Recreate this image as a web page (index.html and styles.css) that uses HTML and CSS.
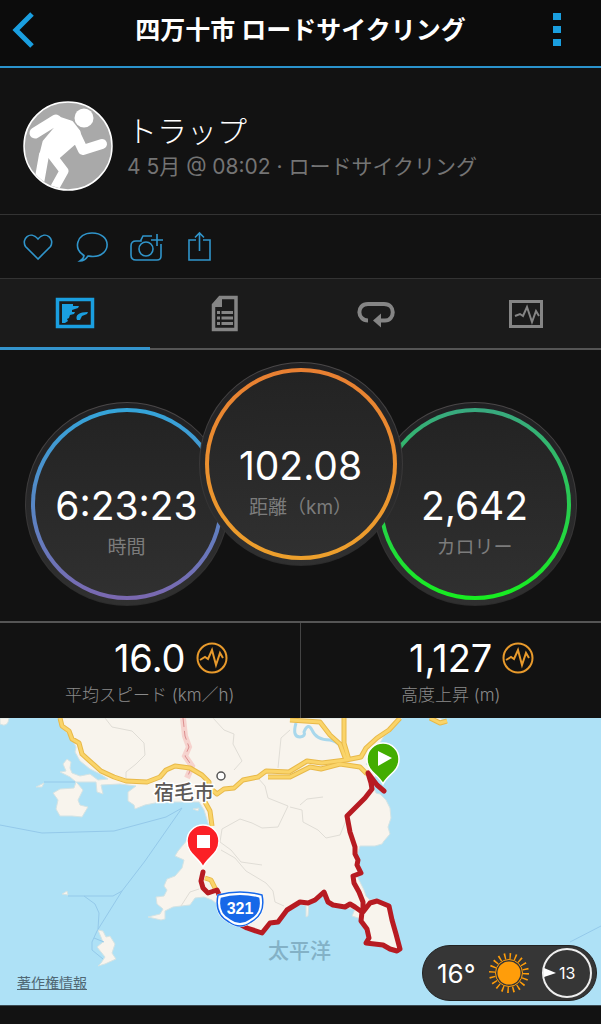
FILE: index.html
```html
<!DOCTYPE html>
<html lang="ja">
<head>
  <meta charset="UTF-8" />
  <meta name="viewport" content="width=device-width, initial-scale=1.0"/>
  <title>四万十市 ロードサイクリング</title>
  <link rel="stylesheet" href="styles.css">
</head>
<body>

  <header class="topbar">
    <button class="icon-btn" aria-label="戻る">
      <svg width="22" height="36" viewBox="0 0 22 36"><path d="M20 2 4 18l16 16" fill="none" stroke="#1a9fe0" stroke-width="5"/></svg>
    </button>
    <h1>四万十市 ロードサイクリング</h1>
    <button class="icon-btn menu" aria-label="メニュー">
      <svg width="8" height="34" viewBox="0 0 8 34" fill="#1a9fe0"><path d="M0 0h8v7H0zM0 13h8v7H0zM0 26h8v7H0z"/></svg>
    </button>
  </header>

  <section class="profile">
    <svg class="avatar" viewBox="0 0 90 90">
      <defs><clipPath id="avatarClip"><circle cx="45" cy="45" r="43"/></clipPath></defs>
      <circle cx="45" cy="45" r="44" fill="#a9a9a9" stroke="#fff" stroke-width="1.5"/>
      <g clip-path="url(#avatarClip)" fill="#fff" stroke="#fff" stroke-linecap="round" stroke-linejoin="round">
        <circle cx="61" cy="17" r="9.500" stroke="none"/>
        <path d="M12 32 33 19" stroke-width="11" fill="none"/>
        <path d="M33 17 48 22 55 31 56 39 50 42 34 56 19 53 22 41 33 28z" stroke-width="5"/>
        <path d="M52 32 60 49 79 43" stroke-width="10" fill="none"/>
        <path d="M28 53 41 70 31 88" stroke-width="9" fill="none"/>
        <path d="M21 54 16 82" stroke-width="10" fill="none"/>
      </g>
    </svg>
    <div class="profile-text">
      <h2>トラップ</h2>
      <p>4 5月 @ 08:02 · ロードサイクリング</p>
    </div>
  </section>

  <div class="actions">
    <button class="icon-btn" aria-label="いいね">
      <svg width="32" height="32" viewBox="0 0 32 32"><path d="M16 28 3.500 15.500C-1 8 8-1 16 8c8-9 17 0 12.500 7.500z"/></svg>
    </button>
    <button class="icon-btn" aria-label="コメント">
      <svg width="32" height="32" viewBox="0 0 32 32"><path d="M8 24.500C-3 19 0 2 16 2c20 0 20 23 1 23.500-3 0-4-.5-5-.5-2 3-5 5-8 5 3-2 4-3.500 4-5.500z"/></svg>
    </button>
    <button class="icon-btn" aria-label="写真を追加">
      <svg width="34" height="32" viewBox="0 0 34 32"><path d="M22 5h-9l-2 4v1H6q-5 0-5 5v9q0 5 5 5h21q4 0 4-4V13"/><circle cx="16" cy="18" r="7"/><path d="M27 3v12M21 9h12"/></svg>
    </button>
    <button class="icon-btn" aria-label="共有">
      <svg width="28" height="32" viewBox="2 0 28 32"><path d="M12 9H5v20h21V9h-7M15.500 20V2M11 6.500 15.500 2 20 6.500"/></svg>
    </button>
  </div>

  <nav class="tabs">
    <button class="tab active" aria-label="マップ">
      <svg width="40" height="36" viewBox="0 0 40 36">
        <path d="M2.500 4.500h35v27h-35z" fill="none" stroke="#1a9fe0" stroke-width="3.500"/>
        <path d="M7 9h11l0 2 6 0-1 2-6 2 0 2 3 0-1 2-4 1-1 3-2 1 1 2-3 2H7zM22 25c-2-5 2-8 11-8l-1 2-5 2-2 4z" fill="#1a9fe0"/>
      </svg>
    </button>
    <button class="tab" aria-label="詳細">
      <svg width="28" height="38" viewBox="0 0 28 38">
        <path d="M9 2.500h16v32H2.500V10z" fill="none" stroke="#858585" stroke-width="3.500"/>
        <path d="M2 10 9 2h2v10H2zM6 16h3v3H6zM10.500 16H22v3H10.500zM6 21.500h3v3H6zM10.500 21.500H22v3H10.500zM6 27h3v3H6zM10.500 27H22v3H10.500z" fill="#858585"/>
      </svg>
    </button>
    <button class="tab" aria-label="ラップ">
      <svg width="38" height="28" viewBox="0 0 38 28">
        <path d="M11 20.500C0 20.500-1 4 11 4h16c12 0 11 16.500 1 16.500h-4" fill="none" stroke="#858585" stroke-width="4"/>
        <path d="m16 20.500 8-7v14z" fill="#858585"/>
      </svg>
    </button>
    <button class="tab" aria-label="グラフ">
      <svg width="36" height="30" viewBox="0 0 36 30" fill="none" stroke="#858585">
        <path d="M2.500 2.500h31v25h-31z" stroke-width="3"/>
        <path d="m7 17 5-2 3 2 4-9 5 15 4-11 3 5" stroke-width="2"/>
      </svg>
    </button>
  </nav>

  <section class="dials">
    <div class="dial time">
      <div class="ring">
        <strong>6:23:23</strong>
        <span>時間</span>
      </div>
    </div>
    <div class="dial distance">
      <div class="ring">
        <strong>102.08</strong>
        <span>距離（km）</span>
      </div>
    </div>
    <div class="dial calories">
      <div class="ring">
        <strong>2,642</strong>
        <span>カロリー</span>
      </div>
    </div>
  </section>

  <section class="stats">
    <div class="stat">
      <div class="stat-value">
        <strong>16.0</strong>
        <svg width="32" height="32" viewBox="0 0 32 32"><circle cx="16" cy="16" r="14.500"/><path d="m4 18 5-3 3 2 4-9 4 15 4-12 3 5"/></svg>
      </div>
      <p>平均スピード (km／h)</p>
    </div>
    <div class="stat">
      <div class="stat-value">
        <strong>1,127</strong>
        <svg width="32" height="32" viewBox="0 0 32 32"><circle cx="16" cy="16" r="14.500"/><path d="m4 18 5-3 3 2 4-9 4 15 4-12 3 5"/></svg>
      </div>
      <p>高度上昇 (m)</p>
    </div>
  </section>

  <section class="map">
    <svg class="map-canvas" viewBox="0 0 601 287">
      <rect width="601" height="287" fill="#aee1f6"/>

      <!-- land -->
      <g fill="#f8f4ed" stroke="#d3e3e4" stroke-width="1" stroke-linejoin="round">
        <path d="M60 0 59 6 68 16 73 23 76 29 75 34 80 43 90 51 100 56 108 61 98 62 90 56 80 58 72 55 70 50 71 44 67 41 63 46 66 53 60 54 70 59 76 64 96 64 97 74 103 76 101 67 120 66 136 68 128 74 128 83 134 87 135 91 145 87 160 84 186 84 199 84 204 92 209 108 200 118 188 121 178 133 175 138 184 142 182 150 175 158 167 161 164 168 167 172 164 178 156 179 157 186 163 191 160 196 148 199 161 202 165 201 165 193 173 189 181 188 190 187 195 180 204 179 212 182 222 190 230 204 248 211 262 214 270 205 280 202 290 190 300 186 306 188 306 199 308 198 309 186 324 177 332 188 345 190 355 191 352 198 361 201 368 212 366 226 380 228 395 234 400 229 392 196 386 186 376 181 370 182 366 178 364 172 357 158 361 154 357 137 360 128 375 128 382 126 384 123 390 116 388 109 391 100 390 90 386 82 380 76 376 75 372 66 377 54 366 46 386 30 380 25 384 18 390 14 402 0z"/>
        <path d="M76 64 74 70 60 71 53 75 58 82 56 91 60 98 72 98 82 99 88 89 80 87 78 82 83 72 78 66z"/>
        <path d="M98 212 103 213 106 219 110 218 115 226 112 235 116 241 105 246 98 248 101 245 105 239 97 229 103 224zM62 176 67 173 68 177zM0 6q8 4 9-6H0zM36 69l8-4-2 4zM193 91l6-1-1 3zM436 4l12 2-8-6h-10z"/>
      </g>

      <!-- rivers and small boundaries -->
      <g fill="none" stroke-linejoin="round">
        <path d="M296 5q-4 14 4 14 6-1 4-5 4-10 8-2 4 10 18 10 12 2 16 18" stroke="#a9d8ec" stroke-width="3"/>
        <path d="M105 0 112 9 132 13 144 25 145 37 136 46 126 54 126 60M213 0 224 12 234 16 233 26 242 43 234 52M290 12 281 20 278 50M258 60 265 68 268 80 288 88 278 109 262 110 252 105 240 101 222 111 220 124 231 132 241 144 262 147M290 89 302 92 303 104 318 112 326 120 340 117 347 100M300 87 307 81 323 79M221 132 235 140 246 153 266 165 273 173 275 184 284 188M181 188 190 174 199 171" stroke="#e0ddd6"/>
        <path d="M0 107 42 115 114 113 166 99 182 90 145 143 122 173 97 213 92 224 92 232 103 241M44 64H75M68 178H113L122 173M84 178 95 186 99 195 98 211M94 220 104 224M570 224 601 208" stroke="#94c9ea"/>
      </g>

      <!-- prefecture border -->
      <path d="M183 0 185 18 189 29 185 38 192 48 187 60" fill="none" stroke="#f6d3ce" stroke-width="6"/>
      <path d="M183 0 185 18 189 29 185 38 192 48 187 60" fill="none" stroke="#dc8f8f" stroke-dasharray="9 4"/>

      <!-- main roads -->
      <g fill="none" stroke-linejoin="round">
        <g stroke="#e8b94a" stroke-width="5">
          <path d="M60 0 62 8 69 13 72 21 79 25 82 36 92 45 101 53 114 59 126 63 147 64 160 59 166 52 175 48 190 50 202 57 209 64 209 69 217 76 224 71 234 70 243 62 258 59 266 53 289 54 307 43 322 45 346 42 361 39 366 30 377 20 389 12 400 0"/>
          <path d="M290 2 320 4 330 17 340 26 346 42M344 0 344 25 349 42M268 59 290 59 310 49 321 51 340 46 360 49 367 56M205 84 210 93 212 108M205 160 211 162 216 172M430 0 440 5 447 3"/>
        </g>
        <g stroke="#fad469" stroke-width="3">
          <path d="M60 0 62 8 69 13 72 21 79 25 82 36 92 45 101 53 114 59 126 63 147 64 160 59 166 52 175 48 190 50 202 57 209 64 209 69 217 76 224 71 234 70 243 62 258 59 266 53 289 54 307 43 322 45 346 42 361 39 366 30 377 20 389 12 400 0"/>
          <path d="M290 2 320 4 330 17 340 26 346 42M344 0 344 25 349 42M268 59 290 59 310 49 321 51 340 46 360 49 367 56M205 84 210 93 212 108M205 160 211 162 216 172M430 0 440 5 447 3"/>
        </g>
      </g>

      <text class="city" x="154" y="82">宿毛市</text>
      <circle cx="221" cy="58" r="4" fill="#fff" stroke="#555" stroke-width="1.500"/>
      <text class="sea" x="268" y="240">太平洋</text>

      <!-- route -->
      <path d="M384 73 377 67 368 55 371 65 372 71 365 80 347 98 350 114 355 129 355 136 358 142 357 147 361 155 353 158 354 165 359 174 363 184 363 194 370 185 377 183 389 188 392 202 396 216 400 231 397 233 390 231 383 227 366 225 369 220 367 211 361 203 362 194 355 189 350 186 345 189 333 187 328 184 324 174 315 182 308 185 300 184 287 192 278 204 270 205 262 215 247 210 232 202 220 179 217 172 208 175 203 170 201 163 203 154" fill="none" stroke="#b71b22" stroke-width="5" stroke-linejoin="round" stroke-linecap="round"/>

      <!-- national road sign -->
      <path d="M219 178q21-6 42 0 4 18-10 25-11 8-22 0-14-7-10-25z" fill="#1768e8" stroke="#fff" stroke-width="4"/>
      <path d="M218 177q22-6 44 0 4 19-11 27-11 8-22 0-15-8-11-27z" fill="none" stroke="#1768e8" stroke-width="1.500"/>
      <text class="road" x="240" y="196">321</text>

      <!-- finish and start pins -->
      <path d="M203 149C198 139 187 136 187 123a16 16 0 0 1 32 0C219 136 208 139 203 149z" fill="#fb2026" stroke="#fff" stroke-width="1.500"/>
      <path d="M197 117h13v13h-13z" fill="#fff"/>
      <path d="M383 66C378 56 367 54 367 41a16 16 0 0 1 32 0C399 54 388 56 383 66z" fill="#43ad00" stroke="#fff" stroke-width="1.500"/>
      <path d="m378 33 14 7-14 8z" fill="#fff"/>
    </svg>

    <a class="copyright" href="#">著作権情報</a>

    <div class="weather">
      <span class="temp">16°</span>
      <svg width="42" height="42" viewBox="-21 -21 42 42">
        <circle r="11.500" fill="#ff9d0a"/>
        <circle r="13.500" fill="none" stroke="#ff9d0a" stroke-width="1"/>
        <circle r="17" fill="none" stroke="#ff9d0a" stroke-width="6" stroke-dasharray="1.500 3.841"/>
      </svg>
      <div class="wind">
        <svg width="12" height="10" viewBox="0 0 12 10"><path d="M0 0 12 5 0 9z" fill="#fff"/></svg>
        <span>13</span>
      </div>
    </div>
  </section>

</body>
</html>
```
FILE: styles.css
```css
* { margin: 0; padding: 0; box-sizing: border-box; }
body {
  font-family: Inter, 'Noto Sans CJK JP', sans-serif;
  background: #121212;
  color: #fff;
}
button {
  background: none;
  border: none;
  cursor: pointer;
}
svg { display: block; }

.topbar {
  display: grid;
  grid-template-columns: 34px 1fr 34px;
  align-items: center;
  height: 68px;
  padding: 0 12px 6px;
  background: #0c0c0c;
  border-bottom: 2px solid #2a93cc;
}
.topbar h1 {
  font-size: 25px;
  line-height: 36px;
  font-weight: 700;
  text-align: center;
}
.topbar .menu {
  justify-self: end;
  padding-right: 28px;
}

.profile {
  display: flex;
  align-items: center;
  gap: 14px;
  height: 147px;
  padding: 10px 23px 0;
  border-bottom: 1px solid #333;
}
.profile .avatar {
  width: 90px;
  height: 90px;
  flex-shrink: 0;
}
.profile-text { padding-top: 6px; }
.profile h2 {
  font-size: 30px;
  line-height: 36px;
  font-weight: 300;
}
.profile p {
  font-size: 21px;
  line-height: 36px;
  font-weight: 400;
  color: #747474;
}

.actions {
  display: flex;
  gap: 22px;
  height: 64px;
  align-items: center;
  padding: 0 22px;
  border-bottom: 1px solid #333;
}
.actions svg {
  fill: none;
  stroke: #3095cb;
  stroke-width: 1.6;
}

.tabs {
  display: grid;
  grid-template-columns: repeat(4, 1fr);
  background: #1b1b1b;
}
.tab {
  display: flex;
  align-items: center;
  justify-content: center;
  height: 71px;
  border-bottom: 2px solid #555;
}
.tab.active { border-bottom: 3px solid #3494cc; }

.dials {
  display: flex;
  justify-content: center;
  padding: 12px 0 15px;
}
.dial {
  width: 204px;
  height: 204px;
  flex-shrink: 0;
  margin-top: 40px;
  padding: 5px;
  border: 1px solid transparent;
  border-radius: 50%;
  background: linear-gradient(#202022, #303030) padding-box, linear-gradient(#4a4748, #2b2b2b) border-box;
}
.dial.distance {
  position: relative;
  margin: 0 -30px 40px;
}
.ring {
  display: flex;
  flex-direction: column;
  align-items: center;
  width: 100%;
  height: 100%;
  padding-top: 70px;
  border: 4px solid transparent;
  border-radius: 50%;
}
.time .ring { background: linear-gradient(#232323, #303030) padding-box, linear-gradient(#34a5da, #7b68b0) border-box; }
.distance .ring { background: linear-gradient(#232323, #303030) padding-box, linear-gradient(#e87f32, #eda02c) border-box; }
.calories .ring { background: linear-gradient(#232323, #303030) padding-box, linear-gradient(#39a980, #17ee20) border-box; }
.ring strong {
  font-size: 39px;
  line-height: 48px;
  font-weight: 400;
}
.ring span {
  font-size: 19px;
  line-height: 36px;
  font-weight: 400;
  color: #7c7c7c;
}

.stats {
  display: grid;
  grid-template-columns: 1fr 1fr;
  border-top: 2px solid #555;
}
.stat {
  padding: 11px 0 9px;
  text-align: center;
}
.stat:first-child { border-right: 1px solid #444; }
.stat-value {
  display: grid;
  grid-template-columns: 1fr auto 1fr;
  align-items: center;
  gap: 10px;
}
.stat-value strong {
  grid-column: 2;
  font-size: 38px;
  line-height: 48px;
  font-weight: 400;
}
.stat-value svg {
  fill: none;
  stroke: #e89a2c;
  stroke-width: 2;
}
.stat p {
  font-size: 17px;
  line-height: 27px;
  font-weight: 300;
  color: #8a8a8a;
}

.map {
  position: relative;
  border-bottom: 1px solid #3c4a52;
}
.map-canvas {
  width: 100%;
  height: auto;
}
.city {
  font-size: 20px;
  font-weight: 500;
  fill: #5c5856;
  stroke: #fff;
  stroke-width: 3px;
  paint-order: stroke;
}
.sea {
  font-size: 21px;
  font-weight: 500;
  fill: #83b1c6;
}
.road {
  font-family: 'Liberation Sans', sans-serif;
  font-size: 16px;
  font-weight: 700;
  text-anchor: middle;
  fill: #fff;
}
.copyright {
  position: absolute;
  left: 17px;
  bottom: 12px;
  font-size: 14px;
  line-height: 20px;
  color: #506874;
}
.weather {
  position: absolute;
  right: 4px;
  bottom: 4px;
  display: flex;
  align-items: center;
  justify-content: space-between;
  width: 175px;
  height: 56px;
  padding: 0 4px 0 14px;
  border: 1px solid #222;
  border-radius: 28px;
  background: #363636;
}
.temp { font-size: 26px; }
.wind {
  display: flex;
  align-items: center;
  gap: 3px;
  width: 50px;
  height: 50px;
  border: 2px solid #eee;
  border-radius: 50%;
  font-size: 16px;
}
```
